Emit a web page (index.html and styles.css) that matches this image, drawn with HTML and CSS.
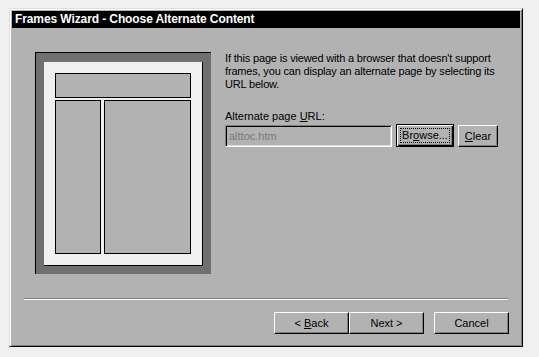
FILE: index.html
```html
<!DOCTYPE html>
<html lang="en">
<head>
  <meta charset="UTF-8">
  <title>Frames Wizard</title>
  <link rel="stylesheet" href="styles.css">
</head>
<body>
  <div class="dialog">
    <div class="titlebar">Frames Wizard - Choose Alternate Content</div>

    <div class="main">
      <div class="preview">
        <div class="page">
          <div class="frame frame-top"></div>
          <div class="frame"></div>
          <div class="frame"></div>
        </div>
      </div>

      <div class="form">
        <p class="info">If this page is viewed with a browser that doesn't support frames, you can display an alternate page by selecting its URL below.</p>
        <div class="label">Alternate page <u>U</u>RL:</div>
        <div class="row">
          <input class="url" type="text" value="alttoc.htm" disabled>
          <button class="btn btn-default"><span class="focus">Br<u>o</u>wse...</span></button>
          <button class="btn btn-clear"><u>C</u>lear</button>
        </div>
      </div>
    </div>

    <div class="sep"></div>

    <div class="buttons">
      <button class="btn btn-nav">&lt; <u>B</u>ack</button>
      <button class="btn btn-nav">Next &gt;</button>
      <button class="btn btn-nav btn-cancel">Cancel</button>
    </div>
  </div>
</body>
</html>
```

FILE: styles.css
```css
body {
  margin: 0;
  padding: 8px 0 0 9px;
  background-color: #f0f0f0;
  font-family: "Liberation Sans", Arial, sans-serif;
  font-size: 11px;
  color: black;
}

.dialog {
  box-sizing: border-box;
  width: 514px;
  height: 339px;
  background-color: #b2b2b2;
  border: 1px solid;
  border-color: #dfdfdf #000 #000 #dfdfdf;
  box-shadow: inset 1px 1px #fff, inset -1px -1px #808080;
  padding: 2px;
  display: flex;
  flex-direction: column;
}

.titlebar {
  height: 17px;
  line-height: 17px;
  background-color: #000;
  color: white;
  font-weight: bold;
  font-size: 12px;
  letter-spacing: -0.1px;
  padding-left: 3px;
}

.main {
  display: flex;
  height: 246px;
  padding: 24px 0 0 23px;
  gap: 14px;
}

/* page preview */
.preview {
  box-sizing: border-box;
  width: 176px;
  height: 222px;
  background-color: #707070;
  border-top: 1px solid #000;
  border-left: 1px solid #000;
  padding: 9px 0 0 8px;
}

.page {
  box-sizing: border-box;
  width: 159px;
  height: 204px;
  background-color: #f0f0f0;
  border-right: 1px solid #000;
  border-bottom: 1px solid #000;
  padding: 11px 0 0 11px;
  display: grid;
  grid-template-columns: 46px 87px;
  grid-template-rows: 25px 154px;
  gap: 2px 3px;
}

.frame {
  border: 1px solid #000;
  background-color: #b2b2b2;
}

.frame-top {
  grid-column: 1 / 3;
}

/* right side */
.form {
  width: 280px;
}

.info {
  margin: 0;
  line-height: 13px;
  letter-spacing: -0.17px;
}

.label {
  margin-top: 19px;
  line-height: 13px;
}

.row {
  display: flex;
  align-items: center;
  gap: 4px;
  margin-top: 1px;
}

.url {
  box-sizing: border-box;
  width: 167px;
  height: 22px;
  margin: 0;
  padding: 0 3px;
  background-color: #b2b2b2;
  color: #7a7a7a;
  font-family: inherit;
  font-size: 11px;
  border: 1px solid;
  border-color: #808080 #fff #fff #808080;
  box-shadow: inset 1px 1px #000, inset -1px -1px #dfdfdf;
}

.btn {
  box-sizing: border-box;
  height: 22px;
  margin: 0;
  padding: 0;
  background-color: #b2b2b2;
  font-family: inherit;
  font-size: 11px;
  color: black;
  border: 1px solid;
  border-color: #fff #000 #000 #fff;
  box-shadow: inset -1px -1px #808080;
}

.btn-default {
  width: 58px;
  height: 23px;
  border: 1px solid #000;
  box-shadow: inset 1px 1px #fff, inset -1px -1px #000, inset -2px -2px #808080;
  padding: 3px;
}

.focus {
  display: block;
  height: 100%;
  box-sizing: border-box;
  border: 1px dotted #000;
  line-height: 13px;
}

.btn-clear {
  width: 40px;
}

.sep {
  margin: 0 12px 0 12px;
  height: 0;
  border-top: 1px solid #808080;
  border-bottom: 1px solid #fff;
}

.buttons {
  display: flex;
  justify-content: flex-end;
  padding: 12px 11px 0 0;
}

.btn-nav {
  width: 75px;
}

.btn-cancel {
  margin-left: 10px;
}
```
